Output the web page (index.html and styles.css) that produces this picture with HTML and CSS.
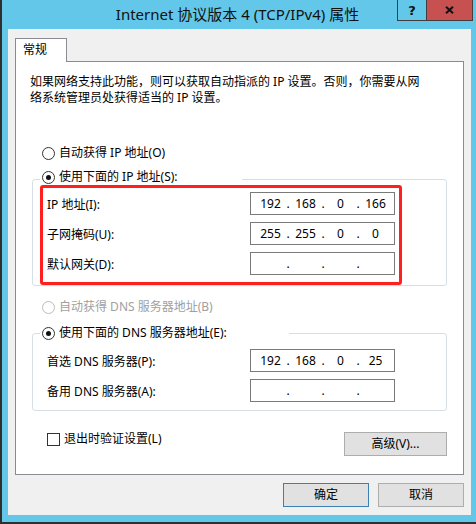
FILE: index.html
```html
<!DOCTYPE html>
<html lang="zh-CN">
<head>
<meta charset="utf-8">
<title>Internet 协议版本 4 (TCP/IPv4) 属性</title>
<link rel="stylesheet" href="styles.css">
</head>
<body>
<div class="window">
  <div class="titlebar">
    <div class="title-spacer"></div>
    <div class="title">Internet 协议版本 4 (TCP/IPv4) 属性</div>
    <div class="caption-btns">
      <div class="cap cap-help">?</div>
      <div class="cap cap-close">
        <svg width="9" height="8" viewBox="0 0 9 8"><path d="M1 0.8 L8 7.2 M8 0.8 L1 7.2" stroke="#111" stroke-width="2" fill="none"/></svg>
      </div>
    </div>
  </div>
  <div class="client">
    <div class="tabs"><div class="tab">常规</div></div>
    <div class="panel">
      <p class="intro">如果网络支持此功能，则可以获取自动指派的 IP 设置。否则，你需要从网<br>络系统管理员处获得适当的 IP 设置。</p>
      <div class="radio radio-auto-ip"><span class="rb"></span><span>自动获得 IP 地址(O)</span></div>
      <fieldset class="group group-ip">
        <legend class="legend-ip"><div class="radio radio-legend"><span class="rb on"></span><span>使用下面的 IP 地址(S):</span></div></legend>
        <div class="rows highlight">
          <div class="row"><span>IP 地址(I):</span><div class="ip"><span class="f">192</span><span class="d">.</span><span class="f">168</span><span class="d">.</span><span class="f">0</span><span class="d">.</span><span class="f">166</span></div></div>
          <div class="row"><span>子网掩码(U):</span><div class="ip"><span class="f">255</span><span class="d">.</span><span class="f">255</span><span class="d">.</span><span class="f">0</span><span class="d">.</span><span class="f">0</span></div></div>
          <div class="row"><span>默认网关(D):</span><div class="ip"><span class="f"></span><span class="d">.</span><span class="f"></span><span class="d">.</span><span class="f"></span><span class="d">.</span><span class="f"></span></div></div>
        </div>
      </fieldset>
      <div class="radio radio-auto-dns disabled"><span class="rb"></span><span>自动获得 DNS 服务器地址(B)</span></div>
      <fieldset class="group group-dns">
        <legend class="legend-dns"><div class="radio radio-legend"><span class="rb on"></span><span>使用下面的 DNS 服务器地址(E):</span></div></legend>
        <div class="rows">
          <div class="row"><span>首选 DNS 服务器(P):</span><div class="ip"><span class="f">192</span><span class="d">.</span><span class="f">168</span><span class="d">.</span><span class="f">0</span><span class="d">.</span><span class="f">25</span></div></div>
          <div class="row"><span>备用 DNS 服务器(A):</span><div class="ip"><span class="f"></span><span class="d">.</span><span class="f"></span><span class="d">.</span><span class="f"></span><span class="d">.</span><span class="f"></span></div></div>
        </div>
      </fieldset>
      <div class="footer">
        <div class="check"><span class="cb"></span><span>退出时验证设置(L)</span></div>
        <button class="btn btn-adv">高级(V)...</button>
      </div>
    </div>
    <div class="dialog-btns">
      <button class="btn btn-default">确定</button>
      <button class="btn">取消</button>
    </div>
  </div>
</div>
</body>
</html>
```
FILE: styles.css
```css
html, body {
  margin: 0;
  padding: 0;
}
body {
  width: 476px;
  height: 524px;
  overflow: hidden;
  font-family: "Noto Sans", "Noto Sans CJK SC", sans-serif;
  font-size: 12px;
  color: #000;
}
.window {
  box-sizing: border-box;
  width: 476px;
  height: 524px;
  background: #62c7e9;
  border-left: 2px solid #2f2f2f;
  border-bottom: 2px solid #2f2f2f;
}
.titlebar {
  height: 29px;
  display: grid;
  grid-template-columns: 1fr auto 1fr;
  padding-right: 3px;
}
.title {
  font-size: 15px;
  line-height: 29px;
  white-space: nowrap;
  color: #111;
}
.caption-btns {
  justify-self: end;
  align-self: start;
  display: flex;
}
.cap {
  box-sizing: border-box;
  height: 21px;
  border: 1px solid #423c3a;
  border-top: 0;
  display: flex;
  align-items: center;
  justify-content: center;
}
.cap-help {
  width: 29px;
  border-right: 0;
  font-family: "DejaVu Sans", sans-serif;
  font-weight: bold;
  font-size: 13px;
  line-height: 13px;
  color: #111;
}
.cap-close {
  width: 47px;
  background: #c75050;
}
.client {
  box-sizing: border-box;
  margin-left: 6px;
  width: 463px;
  height: 486px;
  background: #f0f0f0;
  padding: 9px 7px 0 7px;
}
.tabs {
  display: flex;
}
.tab {
  box-sizing: border-box;
  width: 52px;
  height: 24px;
  border: 1px solid #898c95;
  border-bottom: 0;
  background: #fff;
  padding-left: 7px;
  line-height: 22px;
  margin-bottom: -1px;
  position: relative;
  z-index: 1;
}
.panel {
  box-sizing: border-box;
  height: 414px;
  border: 1px solid #898c95;
  background: #fff;
  padding: 12px 16px 0 14px;
}
.intro {
  margin: 0;
  line-height: 16px;
}
.radio {
  display: flex;
  align-items: center;
  gap: 4px;
  line-height: 16px;
  white-space: nowrap;
}
.rb {
  box-sizing: border-box;
  width: 13px;
  height: 13px;
  border: 1px solid #333;
  border-radius: 50%;
  background: #fff;
  display: flex;
  align-items: center;
  justify-content: center;
  flex: none;
}
.rb.on::after {
  content: "";
  width: 5px;
  height: 5px;
  border-radius: 50%;
  background: #111;
}
.radio.disabled {
  color: #a0a0a0;
}
.radio.disabled .rb {
  border-color: #bcbcbc;
}
.radio-auto-ip {
  margin: 39px 0 0 12px;
}
.radio-auto-dns {
  margin: 13px 0 0 12px;
}
.radio-legend {
  margin-left: 2px;
}
.group {
  min-width: 0;
  margin: 0 0 0 2px;
  border: 1px solid #d5dfe5;
  border-radius: 3px;
}
.group-ip {
  margin-top: 8px;
  padding: 0 0 0 7px;
}
.group-dns {
  margin-top: 10px;
  padding: 5px 0 5px 7px;
}
legend {
  padding: 0;
}
.legend-ip {
  width: 202px;
  padding-bottom: 4px;
}
.legend-dns {
  width: 249px;
}
.rows {
  box-sizing: border-box;
  width: 362px;
  border: 3px solid transparent;
  border-radius: 3px;
  padding: 0 4px 0 4px;
  display: flex;
  flex-direction: column;
  gap: 7px;
}
.highlight {
  margin-top: -4px;
  border-color: #ff1f1f;
  padding: 4px 4px 7px 4px;
}
.row {
  height: 23px;
  display: flex;
  align-items: center;
  justify-content: space-between;
  white-space: nowrap;
}
.ip {
  box-sizing: border-box;
  width: 145px;
  height: 23px;
  border: 1px solid #7a7a7a;
  background: #fff;
  display: flex;
  align-items: center;
  padding-left: 5px;
  line-height: 16px;
}
.ip .f {
  width: 29px;
  text-align: center;
}
.ip .d {
  width: 6px;
  text-align: center;
}
.footer {
  margin-top: 21px;
  padding-left: 17px;
  display: flex;
  justify-content: space-between;
  align-items: flex-start;
}
.check {
  display: flex;
  align-items: center;
  gap: 4px;
  line-height: 14px;
}
.cb {
  box-sizing: border-box;
  width: 13px;
  height: 13px;
  border: 1px solid #333;
  background: #fff;
}
.btn {
  box-sizing: border-box;
  height: 24px;
  margin: 0;
  padding: 0;
  border: 1px solid #adadad;
  background: #e1e1e1;
  font: inherit;
  color: #000;
  line-height: 20px;
}
.btn-adv {
  width: 103px;
}
.dialog-btns {
  display: flex;
  justify-content: flex-end;
  gap: 9px;
  margin-top: 8px;
}
.dialog-btns .btn {
  width: 86px;
}
.btn-default {
  border-color: #3c7fb1;
}
```
